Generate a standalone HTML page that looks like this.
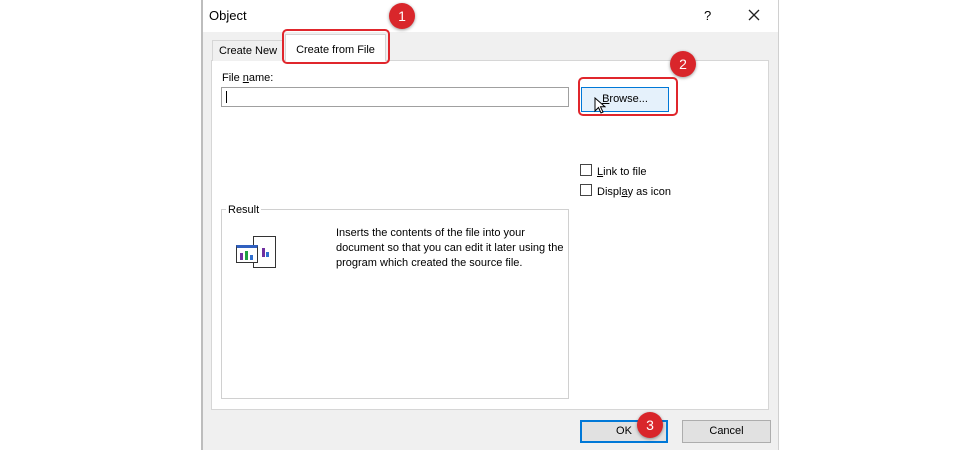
<!DOCTYPE html>
<html><head><meta charset="utf-8"><style>
*{box-sizing:border-box;margin:0;padding:0}
body{width:980px;height:450px;background:#fff;position:relative;overflow:hidden;font-family:"Liberation Sans",sans-serif;font-size:11px;color:#000}
.a{position:absolute}
.dlg{left:201px;top:0;width:578px;height:450px;background:#f0f0f0;border-left:2px solid #bdbdbd;border-right:1px solid #d0d0d0}
.title{left:203px;top:0;width:575px;height:32px;background:#fff}
.panel{left:211px;top:60px;width:558px;height:350px;background:#fff;border:1px solid #d6d6d6}
.tab1{left:212px;top:40px;width:72px;height:21px;background:#f0f0f0;border:1px solid #d6d6d6;border-bottom:none;text-align:center;line-height:20px}
.tab2{left:285px;top:34px;width:101px;height:27px;background:#fff;border:1px solid #d6d6d6;border-bottom:none;text-align:center;line-height:30px}
.red{border:2px solid #e0262c;border-radius:5px}
.badge{width:26px;height:26px;border-radius:50%;background:#d9262b;color:#fff;text-align:center;line-height:26px;font-size:14px;box-shadow:0 1px 3px rgba(0,0,0,.4)}
.btn{background:#e1e1e1;border:1px solid #adadad;text-align:center}
.cb{width:12px;height:12px;border:1px solid #444;background:#fff}
</style></head><body>
<div class="a dlg"></div>
<div class="a title"></div>
<div class="a" style="left:209px;top:8px;font-size:13px">Object</div>
<div class="a" style="left:704px;top:8px;font-size:13px">?</div>
<svg class="a" style="left:748px;top:9px" width="12" height="12"><path d="M1 1L11 11M11 1L1 11" stroke="#222" stroke-width="1.3"/></svg>
<div class="a panel"></div>
<div class="a tab1">Create New</div>
<div class="a tab2">Create from File</div>
<div class="a red" style="left:282px;top:29px;width:108px;height:35px"></div>
<div class="a badge" style="left:389px;top:3px">1</div>
<div class="a" style="left:222px;top:72px">File <u>n</u>ame:</div>
<div class="a" style="left:221px;top:87px;width:348px;height:20px;border:1px solid #a0a0a0;background:#fff"><div class="a" style="left:4px;top:3px;width:1px;height:12px;background:#000"></div></div>
<div class="a btn" style="left:581px;top:87px;width:88px;height:25px;background:#e5f1fb;border-color:#0078d7;line-height:23px"><u>B</u>rowse...</div>
<div class="a red" style="left:578px;top:77px;width:100px;height:39px"></div>
<svg class="a" style="left:594px;top:97px" width="12" height="18"><path d="M1 1L1 14L4.5 10.5L7 16L9 15L6.5 9.8L11 9.8Z" fill="#fff" stroke="#000" stroke-width="1"/></svg>
<div class="a badge" style="left:670px;top:51px">2</div>
<div class="a cb" style="left:580px;top:164px"></div>
<div class="a" style="left:597px;top:166px"><u>L</u>ink to file</div>
<div class="a cb" style="left:580px;top:184px"></div>
<div class="a" style="left:597px;top:186px">Displ<u>a</u>y as icon</div>
<div class="a" style="left:221px;top:209px;width:348px;height:190px;border:1px solid #d0d0d0"></div>
<div class="a" style="left:226px;top:204px;background:#fff;padding:0 2px">Result</div>
<div class="a" style="left:253px;top:236px;width:23px;height:32px;border:1px solid #333;background:#fff"></div>
<div class="a" style="left:236px;top:245px;width:22px;height:18px;border:1px solid #333;background:#fff;border-top:3px solid #3060c0"><div class="a" style="left:3px;top:5px;width:3px;height:7px;background:#7030a0"></div><div class="a" style="left:8px;top:3px;width:3px;height:9px;background:#20a040"></div><div class="a" style="left:13px;top:7px;width:3px;height:5px;background:#3070d0"></div></div>
<div class="a" style="left:262px;top:248px;width:3px;height:9px;background:#7030a0"></div>
<div class="a" style="left:266px;top:252px;width:3px;height:5px;background:#3070d0"></div>
<div class="a" style="left:336px;top:226px;line-height:15px">Inserts the contents of the file into your<br>document so that you can edit it later using the<br>program which created the source file.</div>
<div class="a btn" style="left:580px;top:420px;width:88px;height:23px;border:2px solid #0078d7;line-height:19px">OK</div>
<div class="a badge" style="left:637px;top:412px">3</div>
<div class="a btn" style="left:682px;top:420px;width:89px;height:23px;line-height:21px">Cancel</div>
</body></html>
